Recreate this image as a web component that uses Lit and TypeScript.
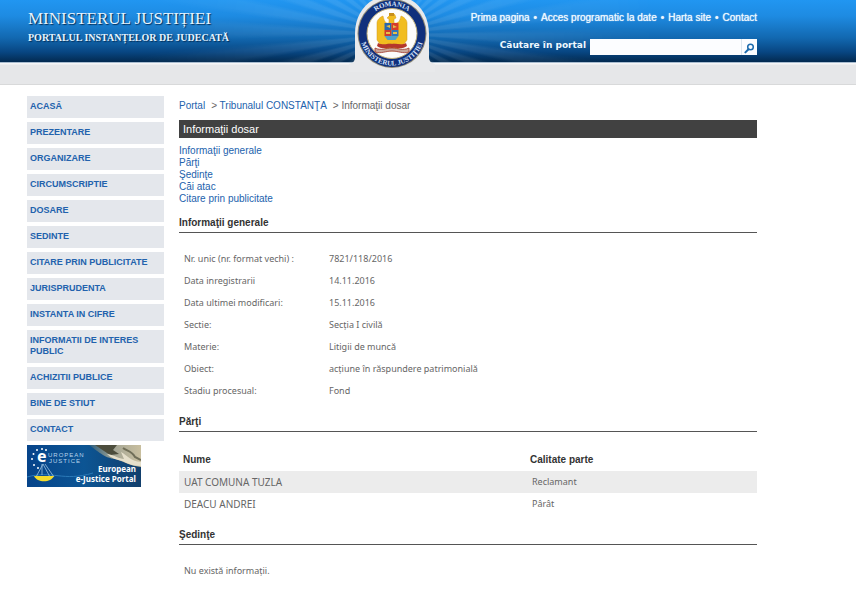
import { LitElement, html, svg, css } from "lit";
import { customElement } from "lit/decorators.js";

const MENU = [
  "ACASĂ", "PREZENTARE", "ORGANIZARE", "CIRCUMSCRIPTIE", "DOSARE", "SEDINTE",
  "CITARE PRIN PUBLICITATE", "JURISPRUDENTA", "INSTANTA IN CIFRE",
  "INFORMATII DE INTERES PUBLIC", "ACHIZITII PUBLICE", "BINE DE STIUT", "CONTACT",
];
const TOP_LINKS = ["Prima pagina", "Acces programatic la date", "Harta site", "Contact"];
const SECTIONS = ["Informaţii generale", "Părţi", "Şedinţe", "Căi atac", "Citare prin publicitate"];
const DETAILS = [
  ["Nr. unic (nr. format vechi) :", "7821/118/2016"],
  ["Data inregistrarii", "14.11.2016"],
  ["Data ultimei modificari:", "15.11.2016"],
  ["Sectie:", "Secția I civilă"],
  ["Materie:", "Litigii de muncă"],
  ["Obiect:", "acțiune în răspundere patrimonială"],
  ["Stadiu procesual:", "Fond"],
];
const PARTIES = [
  ["UAT COMUNA TUZLA", "Reclamant"],
  ["DEACU ANDREI", "Pârât"],
];

@customElement("site-header")
class SiteHeader extends LitElement {
  static styles = css`
    :host { display: block; font-family: "Liberation Sans", sans-serif; }
    .sky {
      position: relative;
      height: 62px;
      background: linear-gradient(#2196f1 0, #1e8be2 16px, #1268b0 38px, #084682 52px, #032a50 62px);
    }
    .rays {
      position: absolute;
      inset: 0;
      background: repeating-conic-gradient(from 0deg at 46% 34px, #ffffff16 0deg 3deg, #ffffff00 5deg 7deg, #ffffff16 9deg);
      mask-image: radial-gradient(circle at 46% 34px, #000 60px, transparent 270px);
    }
    .inner {
      position: relative;
      display: flex;
      justify-content: space-between;
      margin: 0 99px 0 27px;
    }
    .brand {
      padding: 8px 0 0 1px;
      font-family: "Liberation Serif", serif;
      color: #e4f3ff;
      text-shadow: 1px 1px 1px #04305a;
      white-space: nowrap;
    }
    .name { margin: 0; font-size: 17px; line-height: 21px; font-weight: 400; }
    .sub { margin: 0; font-size: 10px; line-height: 18px; font-weight: 700; }
    .tools { display: flex; flex-direction: column; align-items: flex-end; color: #eef8ff; }
    .links { display: flex; gap: 4px; padding-top: 11px; font-size: 10px; line-height: 14px; text-shadow: 0 0 1px #fff; white-space: nowrap; }
    .links a { color: inherit; text-decoration: none; }
    .search { display: flex; align-items: center; padding-top: 13px; }
    .search label { font: 700 9px/14px "DejaVu Sans", sans-serif; padding: 0 4px 4px 0; white-space: nowrap; }
    .search input { box-sizing: border-box; width: 151px; height: 16px; border: 0; padding: 0 4px; background: #fcfdff; font-size: 10px; border-radius: 0; }
    .search button { width: 16px; height: 16px; padding: 0; border: 0; border-left: 1px solid #dce6ee; background: #fcfdff; }
    .search svg { display: block; margin: 2px auto 0; }
    .crest { position: absolute; left: 50%; top: 0; margin-left: -53px; }
    .band { height: 21px; border-top: 1px solid #a9bdd0; background: linear-gradient(#f6f6f7 0 1px, #e6e7e9 2px); border-bottom: 1px solid #d8d9da; }
  `;

  render() {
    return html`
      <header>
        <div class="sky">
          <div class="rays"></div>
          <div class="inner">
            <div class="brand">
              <h1 class="name">MINISTERUL JUSTIȚIEI</h1>
              <p class="sub">PORTALUL INSTANȚELOR DE JUDECATĂ</p>
            </div>
            ${this.crest()}
            <div class="tools">
              <nav class="links">
                ${TOP_LINKS.map((t, i) => html`${i ? html`<span>•</span>` : ""}<a href="#">${t}</a>`)}
              </nav>
              <form class="search">
                <label for="q">Căutare în portal</label>
                <input id="q" type="text">
                <button type="button" aria-label="Caută">
                  <svg width="11" height="11" viewBox="0 0 11 11" fill="none" stroke="#1d6cae">
                    <circle cx="6.5" cy="4" r="2.8" stroke-width="1.5"/>
                    <path d="M4.5 6.2 1.4 9.4" stroke-width="2" stroke-linecap="round"/>
                  </svg>
                </button>
              </form>
            </div>
          </div>
        </div>
        <div class="band"></div>
      </header>`;
  }

  private crest() {
    return html`
      <svg class="crest" width="106" height="72" viewBox="0 0 106 72">
        <defs>
          <path id="top-arc" d="M25.5 33.5a27.5 27.5 0 0 1 55 0"/>
          <path id="bottom-arc" d="M21 33.5a32 32 0 0 0 64 0"/>
        </defs>
        <path d="M10 64c4-1 6-3 6-7V33.5C16 19 23 6 34 0h38c11 6 18 19 18 33.5V57c0 4 2 6 6 7v8H10z" fill="#e8e9eb"/>
        <circle cx="53" cy="33.5" r="34.5" fill="#8f8a76"/>
        <circle cx="53" cy="33.5" r="33.5" fill="#10307c"/>
        <circle cx="53" cy="33.5" r="25" fill="#fdfdfb" stroke="#c4b27a"/>
        <g fill="#f1bd20" stroke="#d29a1a" stroke-width=".5">
          <path d="M51 15c1-2 4-2 5 0l1 3-2 1v4c5 1 6-3 7-7 3 1 6 4 6 7v17l-3 4-2 4-4-3-3 6h-6l-3-6-4 3-2-4-3-4V23c0-3 3-6 6-7 1 4 2 8 6 7v-4l-2-1z"/>
          <path d="M48 44l-3 7h4l4-4 4 4h4l-3-7z"/>
        </g>
        <path d="M50 13h5v3h-5z" fill="#c7901c"/>
        <path d="M45.500 23h7v7h-7z" fill="#2867ae"/>
        <path d="M52.500 23h7v7h-7z" fill="#d63c2b"/>
        <path d="M45.500 30h7v6h-7z" fill="#cf3b2d"/>
        <path d="M52.500 30h7v6h-7z" fill="#3276b8"/>
        <path d="M45.500 36h14l-3 4h-8z" fill="#50a2c8"/>
        <path d="M47 26l4-1v3zM54 25l4 2-4 1zM47 32h4v2h-4zM54 32h4v2h-4z" fill="#e6c048"/>
        <path d="M39 43c6 3 10 0 14 1 5-1 9 2 14-1l1 3c-5 4-10 1-15 2-5-1-10 2-15-2z" fill="#b4382c"/>
        <path d="M36 48c6 3 11 0 17 0s11 3 17 0v4c-6 2-11-1-17-1s-11 3-17 1z" fill="#c9a79a" stroke="#a1382d" stroke-width=".8"/>
        ${svg`<g fill="#d6e2fa" font-family="Liberation Serif, serif" font-weight="700" text-anchor="middle">
          <text font-size="7"><textPath href="#top-arc" startOffset="50%">ROMANIA</textPath></text>
          <text font-size="7"><textPath href="#bottom-arc" startOffset="50%">MINISTERUL JUSTIȚIEI</textPath></text>
        </g>`}
      </svg>`;
  }
}

@customElement("justice-banner")
class JusticeBanner extends LitElement {
  static styles = css`
    :host { display: block; }
    a, svg { display: block; width: 114px; }
  `;
  render() {
    return html`
      <a href="#">
        <svg width="114" height="42" viewBox="0 0 114 42">
          <defs>
            <linearGradient id="sea" x1="0" y1="0" x2="1" y2="0">
              <stop offset="0" stop-color="#06448a"/><stop offset=".5" stop-color="#0c5594"/><stop offset="1" stop-color="#123f6c"/>
            </linearGradient>
            <linearGradient id="stone" x1="0" y1="0" x2="1" y2="0">
              <stop offset="0" stop-color="#2c5d7c"/><stop offset=".5" stop-color="#a6a796"/><stop offset="1" stop-color="#c9bf9f"/>
            </linearGradient>
          </defs>
          <path d="M0 0h114v42H0z" fill="url(#sea)"/>
          <path d="M62 0h52v22c-8-1-13-3-20-6-7-3-12-2-18-6-5-3-8-6-14-10z" fill="url(#stone)"/>
          <path d="M68 0h22l-4 5 6 4-9 1z" fill="#4c4d3d"/>
          <path d="M80 9c8 1 12 5 17 5l-3-7c6 3 9 9 20 10v4c-9 0-14-3-19-5-5-1-11-3-15-7z" fill="#e5dfcb"/>
          <path d="M96 3c4 3 9 3 12 9l6 3" fill="none" stroke="#706e58" stroke-width="2"/>
          <path d="M0 32c25-7 36 5 66-4" fill="none" stroke="#2b7ab8"/>
          <g fill="#fff">
            <circle cx="15" cy="4" r="1"/><circle cx="10" cy="5" r="1"/><circle cx="6.500" cy="9" r="1"/><circle cx="5" cy="14" r="1"/>
            <circle cx="7" cy="20" r="1"/><circle cx="11" cy="23" r="1"/><circle cx="19" cy="5" r="1"/>
          </g>
          <path d="M16 19 9 32M16 19l7 13M18 19l9 13M15 19v11" fill="none" stroke="#9bc2df" stroke-width=".8"/>
          <path d="M7 31h20c-3 7-17 7-20 0z" fill="#f4dc2c"/>
          <g fill="#fff" font-family="Noto Sans, sans-serif">
            <text x="10" y="17" font-size="16" font-weight="700">e</text>
            <g fill="#b8d4ec" font-size="6" font-family="Liberation Sans, sans-serif">
              <text x="21" y="12" letter-spacing="1">UROPEAN</text>
              <text x="22" y="18" letter-spacing="1">JUSTICE</text>
            </g>
            <g font-size="8" font-weight="700" text-anchor="end">
              <text x="109" y="27">European</text>
              <text x="109" y="37">e-Justice Portal</text>
            </g>
          </g>
        </svg>
      </a>`;
  }
}

@customElement("app-root")
class AppRoot extends LitElement {
  static styles = css`
    :host { display: block; min-height: 100vh; background: #fff; font: 10px/12px "Liberation Sans", sans-serif; color: #666; }
    a { color: #2262ad; text-decoration: none; }
    .page { display: grid; grid-template-columns: 137px 1fr; column-gap: 15px; margin: 11px 99px 0 27px; }
    .menu { display: flex; flex-direction: column; gap: 4px; margin: 0; padding: 0; list-style: none; }
    .menu a { display: block; padding: 5px 3px 6px; background: #e4e7ec; font-size: 9px; line-height: 11px; font-weight: 700; }
    justice-banner { margin-top: 4px; }
    .crumbs { display: flex; gap: 6px; padding-top: 4px; white-space: nowrap; }
    .title { margin: 8px 0 7px; padding: 0 4px; background: #414141; color: #fff; font-size: 11px; line-height: 18px; font-weight: 400; }
    .toc { margin: 0; padding: 0; list-style: none; }
    .section { margin: 12px 0 0; padding-bottom: 3px; border-bottom: 1px solid #555; color: #333; font-size: 10px; line-height: 12px; font-weight: 700; }
    table { width: 100%; border-collapse: collapse; table-layout: fixed; font-family: "Noto Sans", sans-serif; font-size: 9px; }
    td, th { height: 22px; padding: 0 0 0 5px; text-align: left; font-weight: 400; line-height: 12px; }
    .details { margin-top: 15px; }
    .details th { width: 145px; }
    .details td { padding-left: 0; }
    .parties { margin: 17px 0 14px; }
    .details { margin-bottom: 14px; }
    .parties thead th { padding-left: 4px; font: 700 10px/12px "Liberation Sans", sans-serif; color: #333; }
    .parties td:first-child { font-size: 10px; }
    .parties td:last-child { padding-left: 2px; }
    .parties thead th:last-child { padding-left: 0; }
    .parties .who { width: 347px; }
    .parties tbody tr:nth-child(odd) { background: #ececec; }
    .none { margin: 20px 5px; font: 9px/12px "Noto Sans", sans-serif; }
  `;

  render() {
    return html`
      <site-header></site-header>
      <div class="page">
        <aside>
          <ul class="menu">${MENU.map((m) => html`<li><a href="#">${m}</a></li>`)}</ul>
          <justice-banner></justice-banner>
        </aside>
        <main>
          <nav class="crumbs">
            <a href="#">Portal</a><span>&gt; <a href="#">Tribunalul CONSTANŢA</a></span><span>&gt; Informaţii dosar</span>
          </nav>
          <h2 class="title">Informaţii dosar</h2>
          <ul class="toc">${SECTIONS.map((s) => html`<li><a href="#">${s}</a></li>`)}</ul>
          <h3 class="section">Informaţii generale</h3>
          <table class="details">
            <tbody>
              ${DETAILS.map(([k, v]) => html`<tr><th scope="row">${k}</th><td>${v}</td></tr>`)}
            </tbody>
          </table>
          <h3 class="section">Părţi</h3>
          <table class="parties">
            <thead><tr><th class="who" scope="col">Nume</th><th scope="col">Calitate parte</th></tr></thead>
            <tbody>${PARTIES.map(([n, q]) => html`<tr><td>${n}</td><td>${q}</td></tr>`)}</tbody>
          </table>
          <h3 class="section">Şedinţe</h3>
          <p class="none">Nu există informații.</p>
        </main>
      </div>`;
  }
}
